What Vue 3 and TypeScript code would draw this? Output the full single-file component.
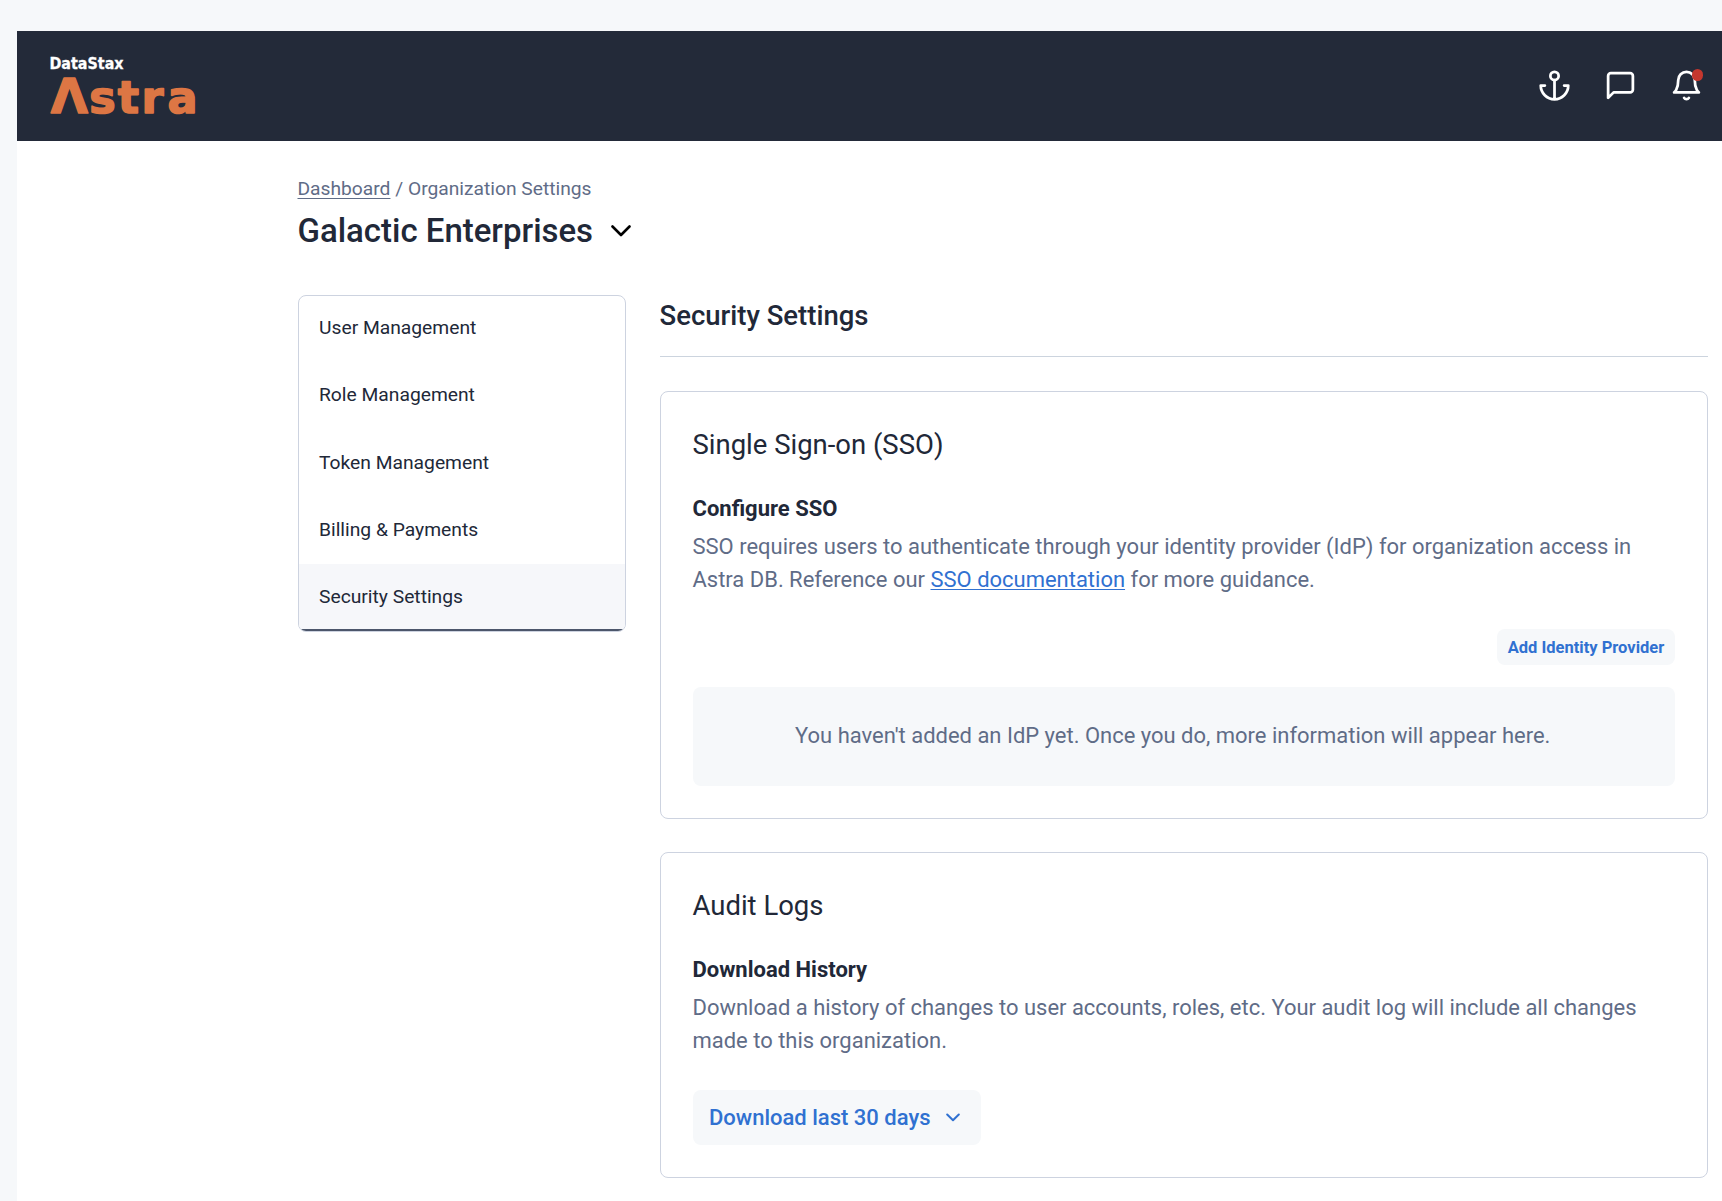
<script setup lang="ts">
import { ref } from 'vue'

const navItems: string[] = [
  'User Management',
  'Role Management',
  'Token Management',
  'Billing & Payments',
  'Security Settings',
]
const active = ref('Security Settings')
</script>

<template>
  <div class="page">
    <div class="app">
      <header class="topbar">
        <svg class="logo" width="160" height="76" viewBox="0 -10 160 76" role="img" aria-label="DataStax Astra">
          <text x="0.5" y="14.2" class="brand" textLength="74" lengthAdjust="spacingAndGlyphs">DataStax</text>
          <text y="57.900" class="product"><tspan class="peak" x="1.8">Λ</tspan><tspan x="40.2 68.8 92.600 118.400">stra</tspan></text>
        </svg>
        <div class="actions">
          <svg class="icon" viewBox="0 0 24 24">
            <circle cx="12" cy="5" r="3" />
            <path d="M12 22V8M5 12H2a10 10 0 0 0 20 0h-3" />
          </svg>
          <svg class="icon" viewBox="0 0 24 24">
            <path d="M21 15a2 2 0 0 1-2 2H7l-4 4V5a2 2 0 0 1 2-2h14a2 2 0 0 1 2 2z" />
          </svg>
          <div class="bell">
            <svg class="icon" viewBox="0 0 24 24">
              <path d="M18 8A6 6 0 0 0 6 8c0 7-3 9-3 9h18s-3-2-3-9M13.73 21a2 2 0 0 1-3.46 0" />
            </svg>
            <span class="dot"></span>
          </div>
        </div>
      </header>

      <main class="content">
        <div class="crumbs"><a class="crumb-link">Dashboard</a> / Organization Settings</div>
        <h1 class="org">
          Galactic Enterprises
          <svg class="org-chevron" width="20" height="13" viewBox="0 0 20 13"><path d="M1.5 2.500l8.500 8.500 8.500-8.500" /></svg>
        </h1>

        <div class="columns">
          <nav class="side">
            <a
              v-for="item in navItems"
              :key="item"
              class="side-item"
              :class="{ active: item === active }"
              @click="active = item"
            >{{ item }}</a>
          </nav>

          <section class="main">
            <h2 class="heading">Security Settings</h2>

            <article class="card">
              <h3 class="card-title">Single Sign-on (SSO)</h3>
              <h4 class="card-sub">Configure SSO</h4>
              <p class="text">
                SSO requires users to authenticate through your identity provider (IdP) for organization access in<br />
                Astra DB. Reference our <a class="link">SSO documentation</a> for more guidance.
              </p>
              <button class="small-btn">Add Identity Provider</button>
              <div class="empty">You haven't added an IdP yet. Once you do, more information will appear here.</div>
            </article>

            <article class="card">
              <h3 class="card-title">Audit Logs</h3>
              <h4 class="card-sub">Download History</h4>
              <p class="text">
                Download a history of changes to user accounts, roles, etc. Your audit log will include all changes<br />
                made to this organization.
              </p>
              <button class="large-btn">
                Download last 30 days
                <svg width="14" height="9" viewBox="0 0 14 9"><path d="M1.2 1.5L7 7.300l5.800-5.800" /></svg>
              </button>
            </article>
          </section>
        </div>
      </main>
    </div>
  </div>
</template>

<style>
body {
  margin: 0;
  overflow: hidden;
}
</style>

<style scoped>
* {
  box-sizing: border-box;
}
.page {
  height: 1201px;
  padding: 31px 0 0 17px;
  background: #f6f8fa;
  font-family: Roboto, "Liberation Sans", sans-serif;
  color: #212838;
  overflow: hidden;
}
.app {
  height: 1170px;
  background: #fff;
}
.topbar {
  display: flex;
  justify-content: space-between;
  height: 109.5px;
  padding: 14px 19px 0 32px;
  background: #232a39;
}
.logo {
  display: block;
  overflow: visible;
}
.brand {
  font: bold 15px "DejaVu Sans", sans-serif;
  fill: #fff;
  stroke: #fff;
  stroke-width: 0.3;
}
.product {
  font: bold 44.5px "DejaVu Sans", sans-serif;
  fill: #dd7644;
  stroke: #dd7644;
  stroke-width: 1.6;
  stroke-linejoin: round;
}
.peak {
  font-size: 48px;
}
.actions {
  display: flex;
  gap: 33px;
  padding-top: 24px;
}
.icon {
  display: block;
  width: 33px;
  height: 33px;
  fill: none;
  stroke: #fff;
  stroke-width: 2;
  stroke-linecap: round;
  stroke-linejoin: round;
}
.bell {
  position: relative;
  height: 33px;
}
.dot {
  position: absolute;
  top: 0;
  right: 0;
  width: 11.5px;
  height: 11.5px;
  border-radius: 50%;
  background: #c5372e;
}
.content {
  padding: 34px 14px 0 280.5px;
}
.crumbs {
  font-size: 19.23px;
  line-height: 27.5px;
  color: #5f6c87;
}
.crumb-link {
  text-decoration: underline;
  text-decoration-thickness: 1px;
  text-underline-offset: 3px;
}
.org {
  display: flex;
  align-items: center;
  gap: 18px;
  margin: 8px 0 0;
  font-size: 32.95px;
  line-height: 41px;
  font-weight: 500;
}
.org-chevron {
  fill: none;
  stroke: #000;
  stroke-width: 2.6;
  stroke-linecap: round;
  stroke-linejoin: round;
}
.columns {
  display: flex;
  align-items: flex-start;
  gap: 33.5px;
  margin-top: 44px;
}
.side {
  display: flex;
  flex-direction: column;
  width: 328.5px;
  height: 337px;
  border: 1px solid #cdd3e0;
  border-radius: 8px;
  overflow: hidden;
}
.side-item {
  flex: 0 0 67.25px;
  padding: 16px 0 0 20.5px;
  font-size: 19.25px;
  line-height: 33px;
}
.side-item:first-child {
  flex-basis: 66.25px;
  padding-top: 15px;
}
.side-item.active {
  flex: 1 0 0;
  background: #f6f7fa;
  border-bottom: 2px solid #4c566b;
}
.main {
  flex: 1;
}
.heading {
  height: 62px;
  margin: 0 0 34px;
  padding-top: 4px;
  border-bottom: 1px solid #ccd4de;
  font-size: 27.5px;
  line-height: 33px;
  font-weight: 500;
}
.card {
  display: flex;
  flex-direction: column;
  padding: 33px 32px 32px;
  margin-bottom: 33px;
  border: 1px solid #cdd3e0;
  border-radius: 8px;
}
.card-title {
  margin: 0;
  font-size: 27.48px;
  line-height: 41px;
  font-weight: 400;
}
.card-sub {
  margin: 26px 0 5px;
  font-size: 22px;
  line-height: 33px;
  font-weight: 700;
}
.text {
  margin: 0;
  font-size: 21.98px;
  line-height: 33px;
  color: #5f6c87;
  white-space: nowrap;
}
.link {
  color: #3071d1;
  text-decoration: underline;
  text-decoration-thickness: 1px;
  text-underline-offset: 2px;
}
button {
  border: 0;
  border-radius: 8px;
  background: #f6f8fa;
  color: #3071d1;
  font-family: inherit;
}
.small-btn {
  align-self: flex-end;
  width: 178px;
  height: 36px;
  margin-top: 33px;
  padding: 0;
  font-size: 16.5px;
  font-weight: 700;
}
.empty {
  height: 99px;
  margin-top: 22px;
  padding: 32px 22px 0 0;
  border-radius: 8px;
  background: #f6f8fa;
  color: #5f6c87;
  font-size: 21.98px;
  line-height: 33px;
  text-align: center;
}
.large-btn {
  display: flex;
  align-items: center;
  gap: 16px;
  width: 288px;
  height: 55px;
  margin-top: 33px;
  padding: 0 0 0 16.5px;
  font-size: 22px;
  font-weight: 500;
}
.large-btn svg {
  fill: none;
  stroke: #3071d1;
  stroke-width: 2;
  stroke-linecap: round;
  stroke-linejoin: round;
}
</style>
